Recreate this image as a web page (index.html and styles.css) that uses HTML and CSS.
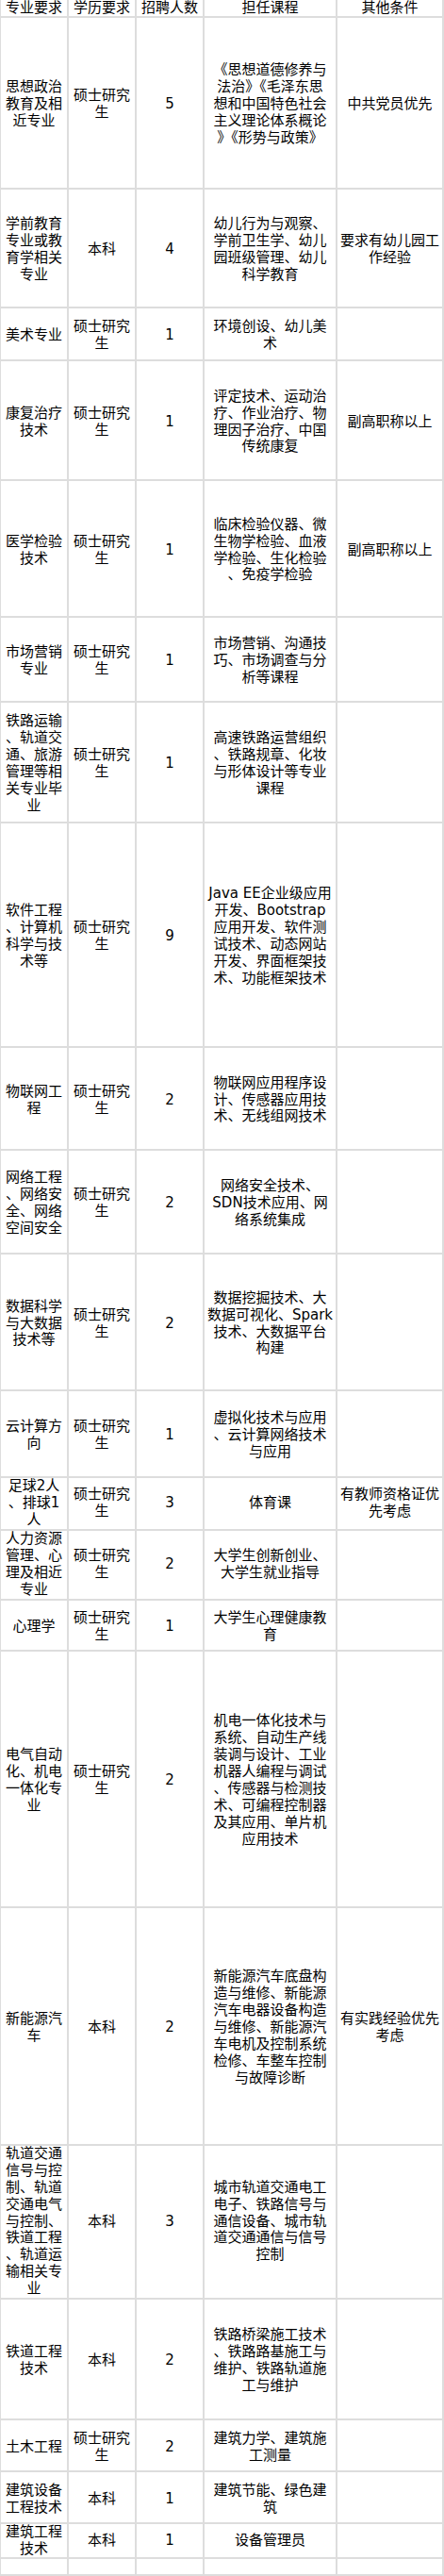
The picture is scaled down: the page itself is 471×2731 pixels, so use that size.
FILE: index.html
```html
<!DOCTYPE html>
<html lang="zh-CN">
<head>
<meta charset="utf-8">
<title>招聘岗位</title>
<link rel="stylesheet" href="styles.css">
</head>
<body>
<div class="tbl">
  <div class="row head">
    <div class="c"><span>专业要求</span></div>
    <div class="c"><span>学历要求</span></div>
    <div class="c"><span>招聘人数</span></div>
    <div class="c"><span>担任课程</span></div>
    <div class="c"><span>其他条件</span></div>
  </div>
  <div class="row">
    <div class="c"><span>思想政治<br>教育及相<br>近专业</span></div>
    <div class="c"><span>硕士研究<br>生</span></div>
    <div class="c"><span>5</span></div>
    <div class="c"><span>《思想道德修养与<br>法治》《毛泽东思<br>想和中国特色社会<br>主义理论体系概论<br>》《形势与政策》</span></div>
    <div class="c"><span>中共党员优先</span></div>
  </div>
  <div class="row">
    <div class="c"><span>学前教育<br>专业或教<br>育学相关<br>专业</span></div>
    <div class="c"><span>本科</span></div>
    <div class="c"><span>4</span></div>
    <div class="c"><span>幼儿行为与观察、<br>学前卫生学、幼儿<br>园班级管理、幼儿<br>科学教育</span></div>
    <div class="c"><span>要求有幼儿园工<br>作经验</span></div>
  </div>
  <div class="row">
    <div class="c"><span>美术专业</span></div>
    <div class="c"><span>硕士研究<br>生</span></div>
    <div class="c"><span>1</span></div>
    <div class="c"><span>环境创设、幼儿美<br>术</span></div>
    <div class="c"></div>
  </div>
  <div class="row">
    <div class="c"><span>康复治疗<br>技术</span></div>
    <div class="c"><span>硕士研究<br>生</span></div>
    <div class="c"><span>1</span></div>
    <div class="c"><span>评定技术、运动治<br>疗、作业治疗、物<br>理因子治疗、中国<br>传统康复</span></div>
    <div class="c"><span>副高职称以上</span></div>
  </div>
  <div class="row">
    <div class="c"><span>医学检验<br>技术</span></div>
    <div class="c"><span>硕士研究<br>生</span></div>
    <div class="c"><span>1</span></div>
    <div class="c"><span>临床检验仪器、微<br>生物学检验、血液<br>学检验、生化检验<br>、免疫学检验</span></div>
    <div class="c"><span>副高职称以上</span></div>
  </div>
  <div class="row">
    <div class="c"><span>市场营销<br>专业</span></div>
    <div class="c"><span>硕士研究<br>生</span></div>
    <div class="c"><span>1</span></div>
    <div class="c"><span>市场营销、沟通技<br>巧、市场调查与分<br>析等课程</span></div>
    <div class="c"></div>
  </div>
  <div class="row">
    <div class="c"><span>铁路运输<br>、轨道交<br>通、旅游<br>管理等相<br>关专业毕<br>业</span></div>
    <div class="c"><span>硕士研究<br>生</span></div>
    <div class="c"><span>1</span></div>
    <div class="c"><span>高速铁路运营组织<br>、铁路规章、化妆<br>与形体设计等专业<br>课程</span></div>
    <div class="c"></div>
  </div>
  <div class="row">
    <div class="c"><span>软件工程<br>、计算机<br>科学与技<br>术等</span></div>
    <div class="c"><span>硕士研究<br>生</span></div>
    <div class="c"><span>9</span></div>
    <div class="c"><span>Java EE企业级应用<br>开发、Bootstrap<br>应用开发、软件测<br>试技术、动态网站<br>开发、界面框架技<br>术、功能框架技术</span></div>
    <div class="c"></div>
  </div>
  <div class="row">
    <div class="c"><span>物联网工<br>程</span></div>
    <div class="c"><span>硕士研究<br>生</span></div>
    <div class="c"><span>2</span></div>
    <div class="c"><span>物联网应用程序设<br>计、传感器应用技<br>术、无线组网技术</span></div>
    <div class="c"></div>
  </div>
  <div class="row">
    <div class="c"><span>网络工程<br>、网络安<br>全、网络<br>空间安全</span></div>
    <div class="c"><span>硕士研究<br>生</span></div>
    <div class="c"><span>2</span></div>
    <div class="c"><span>网络安全技术、<br>SDN技术应用、网<br>络系统集成</span></div>
    <div class="c"></div>
  </div>
  <div class="row">
    <div class="c"><span>数据科学<br>与大数据<br>技术等</span></div>
    <div class="c"><span>硕士研究<br>生</span></div>
    <div class="c"><span>2</span></div>
    <div class="c"><span>数据挖掘技术、大<br>数据可视化、Spark<br>技术、大数据平台<br>构建</span></div>
    <div class="c"></div>
  </div>
  <div class="row">
    <div class="c"><span>云计算方<br>向</span></div>
    <div class="c"><span>硕士研究<br>生</span></div>
    <div class="c"><span>1</span></div>
    <div class="c"><span>虚拟化技术与应用<br>、云计算网络技术<br>与应用</span></div>
    <div class="c"></div>
  </div>
  <div class="row fit">
    <div class="c"><span>足球2人<br>、排球1<br>人</span></div>
    <div class="c"><span>硕士研究<br>生</span></div>
    <div class="c"><span>3</span></div>
    <div class="c"><span>体育课</span></div>
    <div class="c"><span>有教师资格证优<br>先考虑</span></div>
  </div>
  <div class="row fit">
    <div class="c"><span>人力资源<br>管理、心<br>理及相近<br>专业</span></div>
    <div class="c"><span>硕士研究<br>生</span></div>
    <div class="c"><span>2</span></div>
    <div class="c"><span>大学生创新创业、<br>大学生就业指导</span></div>
    <div class="c"></div>
  </div>
  <div class="row">
    <div class="c"><span>心理学</span></div>
    <div class="c"><span>硕士研究<br>生</span></div>
    <div class="c"><span>1</span></div>
    <div class="c"><span>大学生心理健康教<br>育</span></div>
    <div class="c"></div>
  </div>
  <div class="row">
    <div class="c"><span>电气自动<br>化、机电<br>一体化专<br>业</span></div>
    <div class="c"><span>硕士研究<br>生</span></div>
    <div class="c"><span>2</span></div>
    <div class="c"><span>机电一体化技术与<br>系统、自动生产线<br>装调与设计、工业<br>机器人编程与调试<br>、传感器与检测技<br>术、可编程控制器<br>及其应用、单片机<br>应用技术</span></div>
    <div class="c"></div>
  </div>
  <div class="row">
    <div class="c"><span>新能源汽<br>车</span></div>
    <div class="c"><span>本科</span></div>
    <div class="c"><span>2</span></div>
    <div class="c"><span>新能源汽车底盘构<br>造与维修、新能源<br>汽车电器设备构造<br>与维修、新能源汽<br>车电机及控制系统<br>检修、车整车控制<br>与故障诊断</span></div>
    <div class="c"><span>有实践经验优先<br>考虑</span></div>
  </div>
  <div class="row fit">
    <div class="c"><span>轨道交通<br>信号与控<br>制、轨道<br>交通电气<br>与控制、<br>铁道工程<br>、轨道运<br>输相关专<br>业</span></div>
    <div class="c"><span>本科</span></div>
    <div class="c"><span>3</span></div>
    <div class="c"><span>城市轨道交通电工<br>电子、铁路信号与<br>通信设备、城市轨<br>道交通通信与信号<br>控制</span></div>
    <div class="c"></div>
  </div>
  <div class="row">
    <div class="c"><span>铁道工程<br>技术</span></div>
    <div class="c"><span>本科</span></div>
    <div class="c"><span>2</span></div>
    <div class="c"><span>铁路桥梁施工技术<br>、铁路路基施工与<br>维护、铁路轨道施<br>工与维护</span></div>
    <div class="c"></div>
  </div>
  <div class="row">
    <div class="c"><span>土木工程</span></div>
    <div class="c"><span>硕士研究<br>生</span></div>
    <div class="c"><span>2</span></div>
    <div class="c"><span>建筑力学、建筑施<br>工测量</span></div>
    <div class="c"></div>
  </div>
  <div class="row">
    <div class="c"><span>建筑设备<br>工程技术</span></div>
    <div class="c"><span>本科</span></div>
    <div class="c"><span>1</span></div>
    <div class="c"><span>建筑节能、绿色建<br>筑</span></div>
    <div class="c"></div>
  </div>
  <div class="row fit">
    <div class="c"><span>建筑工程<br>技术</span></div>
    <div class="c"><span>本科</span></div>
    <div class="c"><span>1</span></div>
    <div class="c"><span>设备管理员</span></div>
    <div class="c"></div>
  </div>
  <div class="row fit">
    <div class="c"></div>
    <div class="c"></div>
    <div class="c"></div>
    <div class="c"></div>
    <div class="c"></div>
  </div>
</div>
</body>
</html>
```
FILE: styles.css
```css
html, body {
  margin: 0;
  padding: 0;
  background: #ffffff;
}

body {
  font-family: "DejaVu Sans", "Noto Sans CJK SC", sans-serif;
  font-size: 15px;
  line-height: 17.9px;
  color: #000000;
}

.tbl {
  display: grid;
  width: max-content;
  grid-template-columns: 70px 70px 70px 139px 111px;
  grid-template-rows:
    17px 180px 124px 54px 125px 143px 88px 126px 236px 107px 108px 143px
    90px 54px 72px 52px 270px 250px 161px 126px 53px 53px 35px 16px;
  gap: 2px;
  padding: 0 2px 2px 1px;
  background: #dddddd;
}

.row {
  display: contents;
}

.c {
  display: flex;
  align-items: center;
  justify-content: center;
  text-align: center;
  white-space: nowrap;
  background: #ffffff;
  padding-top: 4px;
  min-width: 0;
}

.row.fit > .c {
  padding-top: 0;
}

.row.head > .c {
  padding-top: 1px;
}
```
